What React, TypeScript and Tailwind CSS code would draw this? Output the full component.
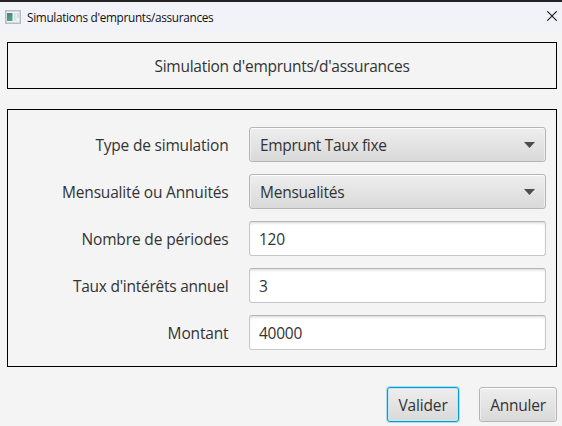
function AppIcon() {
  return (
    <svg width="16" height="14" viewBox="0 0 16 14" className="shrink-0">
      <defs>
        <linearGradient id="pane" x1="0" y1="0" x2="0.4" y2="1">
          <stop offset="0" stopColor="#4f79a8" />
          <stop offset="1" stopColor="#4fa57c" />
        </linearGradient>
      </defs>
      <rect x="0.75" y="0.75" width="14.5" height="12.5" fill="#f4f5f7" stroke="#b9bcc4" strokeWidth="1.5" />
      <rect x="2" y="3" width="5.5" height="8" fill="url(#pane)" />
      <rect x="8.5" y="3" width="3" height="8" fill="#d5e8e2" />
      <rect x="12" y="3" width="2" height="5" fill="#cfdcea" />
    </svg>
  );
}

function Label({ text, spacing }: { text: string; spacing: string }) {
  return (
    <div className="flex h-[35px] w-[221px] items-center justify-end pr-[0.5px] whitespace-nowrap">
      <span className={spacing}>{text}</span>
    </div>
  );
}

function Combo({ text, spacing }: { text: string; spacing: string }) {
  return (
    <div className="flex h-[35px] w-[297px] items-center justify-between rounded-[3px] border border-[#b5b5b5] bg-linear-to-b from-[#eeeeee] to-[#d9d9d9] px-[10px] shadow-[inset_0_1px_0_#fdfdfd,inset_1px_0_0_#eeeeee,inset_-1px_0_0_#eeeeee]">
      <span className={spacing}>{text}</span>
      <svg width="11" height="6" viewBox="0 0 11 6">
        <path d="M0 0H11L5.5 6Z" fill="#4d4d4d" />
      </svg>
    </div>
  );
}

function Field({ text }: { text: string }) {
  return (
    <div className="flex h-[35px] w-[297px] items-center rounded-[3px] border border-[#c8c8c8] border-t-[#b5b5b5] bg-white pl-[9px] shadow-[inset_0_2px_3px_-1px_#d4d4d4]">
      <span className="tracking-[-0.25px]">{text}</span>
    </div>
  );
}

export default function App() {
  return (
    <div className="flex h-[426px] w-[562px] flex-col overflow-hidden bg-[#f4f4f4] font-['Open_Sans','Noto_Sans',sans-serif] text-[15.5px] leading-5 text-[#333333]">
      <div className="h-[2px] bg-[#252326]" />
      <header className="flex h-[30px] items-center bg-[#f1f3f9] pr-[5px] pl-[5px] text-[11.8px] text-[#111111]">
        <AppIcon />
        <span className="ml-[6px] tracking-[-0.32px]">Simulations d'emprunts/assurances</span>
        <svg className="mb-[2px] ml-auto" width="10" height="10" viewBox="0 0 10 10">
          <path d="M0.3 0.3L9.7 9.7M9.7 0.3L0.3 9.7" stroke="#1a1a1a" strokeWidth="1.1" />
        </svg>
      </header>
      <div className="mt-[10px] ml-[7px] flex h-[47px] w-[550px] items-center justify-center border border-black">
        <span className="tracking-[-0.27px]">Simulation d'emprunts/d'assurances</span>
      </div>
      <div className="mt-5 ml-[7px] flex h-[258px] w-[550px] flex-col gap-3 border border-black pt-[17px]">
        <div className="flex gap-5">
          <Label text="Type de simulation" spacing="tracking-[-0.2px]" />
          <Combo text="Emprunt Taux fixe" spacing="tracking-[-0.32px]" />
        </div>
        <div className="flex gap-5">
          <Label text="Mensualité ou Annuités" spacing="tracking-[-0.18px]" />
          <Combo text="Mensualités" spacing="tracking-[-0.25px]" />
        </div>
        <div className="flex gap-5">
          <Label text="Nombre de périodes" spacing="tracking-[-0.13px]" />
          <Field text="120" />
        </div>
        <div className="flex gap-5">
          <Label text="Taux d'intérêts annuel" spacing="tracking-[-0.25px]" />
          <Field text="3" />
        </div>
        <div className="flex gap-5">
          <Label text="Montant" spacing="tracking-[-0.15px]" />
          <Field text="40000" />
        </div>
      </div>
      <div className="mt-5 mr-[5px] flex justify-end gap-5">
        <button className="flex h-[35px] w-[72px] items-center justify-center rounded-[3px] border border-[#039ed3] bg-linear-to-b from-[#eeeeee] to-[#d9d9d9] tracking-[-0.15px] shadow-[0_0_0_1px_#a9dcec,inset_0_0_0_1px_#c9e6ef]">
          Valider
        </button>
        <button className="flex h-[35px] w-[78px] items-center justify-center rounded-[3px] border border-[#b5b5b5] bg-linear-to-b from-[#eeeeee] to-[#d9d9d9] tracking-[-0.25px] shadow-[inset_0_1px_0_#fdfdfd,inset_1px_0_0_#eeeeee,inset_-1px_0_0_#eeeeee]">
          Annuler
        </button>
      </div>
    </div>
  );
}
